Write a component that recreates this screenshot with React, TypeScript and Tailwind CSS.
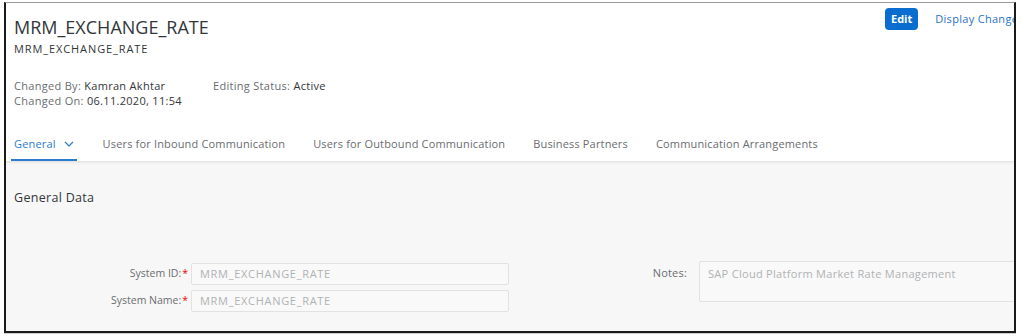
import React from "react";

const tabs = [
  "Users for Inbound Communication",
  "Users for Outbound Communication",
  "Business Partners",
  "Communication Arrangements",
];

function Field({ label, value }: { label: string; value: string }) {
  return (
    <div className="flex items-center h-[27px]">
      <div className="w-[174px] text-right text-[10.5px] text-[#6a6d70]">
        {label}
        <span className="text-[#e00] ml-[1px]">*</span>
      </div>
      <div className="ml-[3px] w-[318px] h-[22px] border border-[#e2e2e2] bg-[#f9f9f9] rounded-[2px] px-[8px] flex items-center text-[11px] tracking-[0.7px] text-[#b0b2b4]">
        {value}
      </div>
    </div>
  );
}

export default function App() {
  return (
    <div className="w-[1024px] h-[336px] bg-white overflow-hidden" style={{ fontFamily: '"Open Sans", "Liberation Sans", sans-serif' }}>
      <div className="ml-[4px] mt-[2px] w-[1012px] h-[331px] border-t border-t-[#9a9a9a] border-x-2 border-b-2 border-x-[#1a1a1a] border-b-[#1a1a1a] overflow-hidden flex flex-col shadow-[0_1px_0_#cfcfcf]">
        {/* header */}
        <div className="bg-white relative">
          <div className="absolute left-[879px] top-[5px] flex items-center gap-[17px]">
            <button className="h-[22px] px-[6px] rounded-[4px] bg-[#0a6ed1] text-white text-[11px] font-bold">Edit</button>
            <span className="text-[11px] tracking-[0.3px] text-[#2a73c4] whitespace-nowrap">Display Change Log</span>
          </div>
          <div className="pl-[8px] pt-[12px]">
            <div className="text-[18px] leading-[24px] text-[#32363a]">MRM_EXCHANGE_RATE</div>
            <div className="text-[11px] leading-[14px] mt-[3px] tracking-[0.9px] text-[#32363a]">MRM_EXCHANGE_RATE</div>
            <div className="flex mt-[22px] text-[11px] leading-[15px] tracking-[0.3px]">
              <div className="w-[199px]">
                <div><span className="text-[#6a6d70]">Changed By: </span><span className="text-[#32363a]">Kamran Akhtar</span></div>
                <div><span className="text-[#6a6d70]">Changed On: </span><span className="text-[#32363a]">06.11.2020, 11:54</span></div>
              </div>
              <div><span className="text-[#6a6d70]">Editing Status: </span><span className="text-[#32363a]">Active</span></div>
            </div>
          </div>
          <div className="flex items-end h-[54px] pl-[5px] text-[11px] tracking-[0.16px] border-b border-[#e5e5e5] shadow-[0_1px_2px_rgba(0,0,0,0.06)]">
            <div className="flex items-center gap-[8px] px-[3px] pb-[7px] border-b-2 border-[#2b7ccf] text-[#2b7ccf]">
              General
              <svg width="10" height="6" viewBox="0 0 10 6" fill="none" stroke="#2b7ccf" strokeWidth="1.2">
                <path d="M1 1l4 4 4-4" />
              </svg>
            </div>
            {tabs.map((t, i) => (
              <div key={t} className={`pb-[9px] text-[#6a6d70] ${i === 0 ? "ml-[26px]" : "ml-[28px]"}`}>
                {t}
              </div>
            ))}
          </div>
        </div>
        {/* content */}
        <div className="flex-1 bg-[#f7f7f7] pl-[8px] pt-[27px]">
          <div className="text-[12.5px] tracking-[0.3px] text-[#32363a]">General Data</div>
          <div className="flex mt-[53px]">
            <div>
              <Field label="System ID:" value="MRM_EXCHANGE_RATE" />
              <Field label="System Name:" value="MRM_EXCHANGE_RATE" />
            </div>
            <div className="flex">
              <div className="w-[178px] text-right text-[11px] tracking-[0.2px] text-[#6a6d70] pt-[4px]">Notes:</div>
              <div className="ml-[12px] w-[330px] h-[41px] border border-[#e2e2e2] bg-[#f9f9f9] rounded-[2px] px-[8px] pt-[4px] text-[11px] tracking-[0.3px] text-[#b0b2b4] whitespace-nowrap">
                SAP Cloud Platform Market Rate Management
              </div>
            </div>
          </div>
        </div>
      </div>
    </div>
  );
}
